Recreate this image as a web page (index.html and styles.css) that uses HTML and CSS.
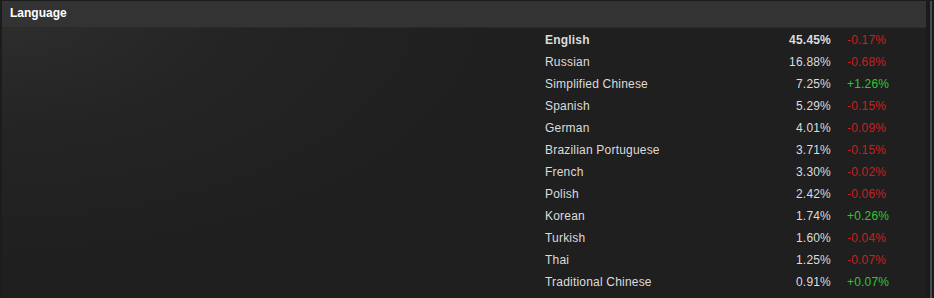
FILE: index.html
```html
<!DOCTYPE html>
<html>
<head>
<meta charset="utf-8">
<link rel="stylesheet" href="styles.css">
</head>
<body>
<div class="frame">
  <div class="panel">
    <div class="panel-header">Language</div>
    <div class="panel-body">
      <div class="spacer"></div>
      <div class="stats">
        <div class="row top"><span class="name">English</span><span class="pct">45.45%</span><span class="chg neg">-0.17%</span></div>
        <div class="row"><span class="name">Russian</span><span class="pct">16.88%</span><span class="chg neg">-0.68%</span></div>
        <div class="row"><span class="name">Simplified Chinese</span><span class="pct">7.25%</span><span class="chg pos">+1.26%</span></div>
        <div class="row"><span class="name">Spanish</span><span class="pct">5.29%</span><span class="chg neg">-0.15%</span></div>
        <div class="row"><span class="name">German</span><span class="pct">4.01%</span><span class="chg neg">-0.09%</span></div>
        <div class="row"><span class="name">Brazilian Portuguese</span><span class="pct">3.71%</span><span class="chg neg">-0.15%</span></div>
        <div class="row"><span class="name">French</span><span class="pct">3.30%</span><span class="chg neg">-0.02%</span></div>
        <div class="row"><span class="name">Polish</span><span class="pct">2.42%</span><span class="chg neg">-0.06%</span></div>
        <div class="row"><span class="name">Korean</span><span class="pct">1.74%</span><span class="chg pos">+0.26%</span></div>
        <div class="row"><span class="name">Turkish</span><span class="pct">1.60%</span><span class="chg neg">-0.04%</span></div>
        <div class="row"><span class="name">Thai</span><span class="pct">1.25%</span><span class="chg neg">-0.07%</span></div>
        <div class="row"><span class="name">Traditional Chinese</span><span class="pct">0.91%</span><span class="chg pos">+0.07%</span></div>
      </div>
    </div>
  </div>
  <div class="edge"></div>
</div>
</body>
</html>
```

FILE: styles.css
```css
html, body {
  margin: 0;
  padding: 0;
  background: #1b1c1e;
  width: 934px;
  height: 298px;
  overflow: hidden;
  font-family: "Liberation Sans", Arial, sans-serif;
}
.frame {
  display: flex;
  height: 298px;
  padding-top: 1px;
  box-sizing: border-box;
  background: #1c1c1c;
}
.panel {
  width: 924px;
  margin-left: 2px;
  display: flex;
  flex-direction: column;
  background: radial-gradient(ellipse 520px 260px at 0px 10px, #2e2e2e 0%, #242424 45%, #1f1f1f 100%);
}
.panel-header {
  height: 26px;
  line-height: 25px;
  background: #333333;
  border-bottom: 1px solid #2a2a2a;
  color: #ffffff;
  font-size: 12px;
  font-weight: bold;
  padding-left: 8px;
}
.panel-body {
  display: flex;
  flex: 1;
  padding-top: 1px;
}
.spacer {
  width: 543px;
}
.stats {
  display: flex;
  flex-direction: column;
}
.row {
  display: flex;
  height: 22px;
  line-height: 22px;
  font-size: 12px;
  letter-spacing: 0.2px;
  color: #dcdcdc;
}
.row.top .name, .row.top .pct {
  font-weight: bold;
}
.name {
  width: 215px;
}
.pct {
  width: 71px;
  text-align: right;
}
.chg {
  padding-left: 16px;
}
.neg { color: #c82020; }
.pos { color: #30c830; }
.edge {
  width: 4px;
  margin-left: 0;
  background: #1b1b1b;
  border-right: 2px solid #474c55;
}
```
